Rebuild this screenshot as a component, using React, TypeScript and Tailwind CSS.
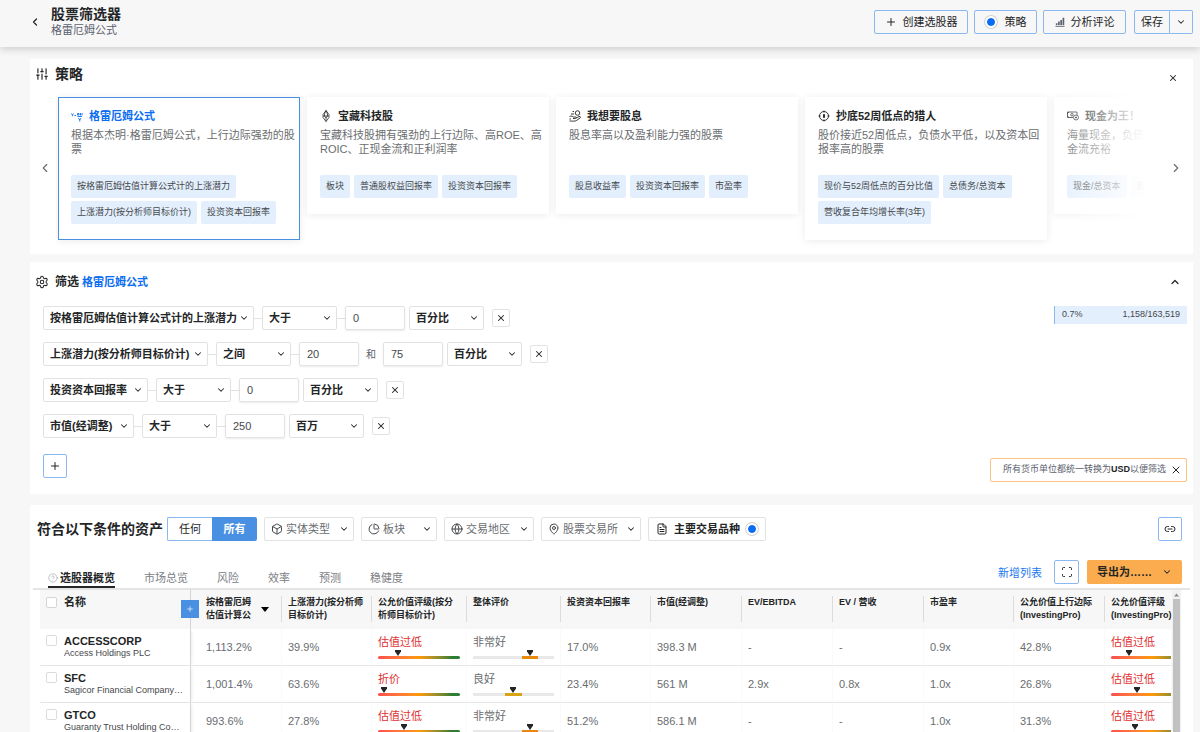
import React, { useState } from "react";
import {
  Box,
  ChartPie,
  ChevronDown,
  ChevronLeft,
  ChevronRight,
  ChevronUp,
  CircleQuestionMark,
  FileText,
  Globe,
  Link2,
  MapPin,
  Plus,
  Scan,
  Settings,
  SlidersVertical,
  X,
} from "lucide-react";

type IconProps = { className?: string };

function FormulaIcon({ className }: IconProps) {
  return (
    <svg viewBox="0 0 24 24" className={className} fill="none" stroke="currentColor" strokeWidth="1.8">
      <path d="M1 7l2 3.500L5 7M3 10.500v2M7 11h3M13 7h3v3h-3zM19 6v5M22 6v5M13 13h9M15 16l2.500 4L20 16M17.500 20v3" />
    </svg>
  );
}

function GemIcon({ className }: IconProps) {
  return (
    <svg viewBox="0 0 24 24" className={className} fill="none" stroke="currentColor" strokeWidth="1.5">
      <path d="M12 1l6 8v6l-6 8-6-8V9zM6 12h12M12 1L9 8v4l3 4 3-4V8zM12 16v7" />
    </svg>
  );
}

function HandCoinIcon({ className }: IconProps) {
  return (
    <svg viewBox="0 0 24 24" className={className} fill="none" stroke="currentColor" strokeWidth="1.8">
      <circle cx="17" cy="6" r="4.5" />
      <path d="M10 3H7M10 8H4M1 13c4-2 6 0 8 1h4c2 0 2 3 0 3H8M14 16l6-3c3-1 4 2 2 3l-7 5c-3 2-8 1-14 1M1 18h3" />
    </svg>
  );
}

function TargetIcon({ className }: IconProps) {
  return (
    <svg viewBox="0 0 24 24" className={className} fill="none" stroke="currentColor" strokeWidth="1.8">
      <circle cx="12" cy="12" r="9" />
      <path d="M12 1v4M12 19v4M1 12h4M19 12h4" />
      <path d="M12 8l1.500 4-1.500 4-1.500-4z" fill="currentColor" />
    </svg>
  );
}

function CashIcon({ className }: IconProps) {
  return (
    <svg viewBox="0 0 24 24" className={className} fill="none" stroke="currentColor" strokeWidth="1.8">
      <path d="M12 15H1V4h19v6M1 7l3-3M1 12l3 3" />
      <circle cx="10" cy="9.5" r="2.5" />
      <circle cx="18" cy="15" r="5" />
      <path d="M16 15h4M18 13v4" />
    </svg>
  );
}

function BarsIcon({ className }: IconProps) {
  return (
    <svg viewBox="0 0 12 12" className={className} fill="currentColor">
      <path d="M1 7.5h2V10H1zM3.7 5.5h2V10h-2zM6.4 3.5h2V10h-2zM9.1 1h2v9h-2zM0.5 10.8h11v.9H.5z" />
    </svg>
  );
}

const STRATEGIES = [
  {
    title: "格雷厄姆公式",
    lines: ["根据本杰明·格雷厄姆公式，上行边际强劲的股", "票"],
    tags: ["按格雷厄姆估值计算公式计的上涨潜力", "上涨潜力(按分析师目标价计)", "投资资本回报率"],
    icon: FormulaIcon,
    active: true,
  },
  {
    title: "宝藏科技股",
    lines: ["宝藏科技股拥有强劲的上行边际、高ROE、高", "ROIC、正现金流和正利润率"],
    tags: ["板块", "普通股权益回报率", "投资资本回报率"],
    icon: GemIcon,
  },
  {
    title: "我想要股息",
    lines: ["股息率高以及盈利能力强的股票"],
    tags: ["股息收益率", "投资资本回报率", "市盈率"],
    icon: HandCoinIcon,
  },
  {
    title: "抄底52周低点的猎人",
    lines: ["股价接近52周低点，负债水平低，以及资本回", "报率高的股票"],
    tags: ["现价与52周低点的百分比值", "总债务/总资本", "营收复合年均增长率(3年)"],
    icon: TargetIcon,
  },
  {
    title: "现金为王！",
    lines: ["海量现金，负债", "金流充裕"],
    tags: ["现金/总资本", "资"],
    icon: CashIcon,
  },
];

const FILTERS = [
  { metric: "按格雷厄姆估值计算公式计的上涨潜力", width: "w-[211px]", op: "大于", values: ["0"], unit: "百分比" },
  { metric: "上涨潜力(按分析师目标价计)", width: "w-[165px]", op: "之间", values: ["20", "75"], unit: "百分比" },
  { metric: "投资资本回报率", width: "w-[105px]", op: "大于", values: ["0"], unit: "百分比" },
  { metric: "市值(经调整)", width: "w-[91px]", op: "大于", values: ["250"], unit: "百万" },
];

const ASSET_FILTERS = [
  { label: "实体类型", icon: Box, width: "w-[90px]" },
  { label: "板块", icon: ChartPie, width: "w-[76px]" },
  { label: "交易地区", icon: Globe, width: "w-[90px]" },
  { label: "股票交易所", icon: MapPin, width: "w-[100px]" },
];

const TABS = ["选股器概览", "市场总览", "风险", "效率", "预测", "稳健度"];

const COLUMNS: string[][] = [
  ["上涨潜力(按分析师", "目标价计)"],
  ["公允价值评级(按分", "析师目标价计)"],
  ["整体评价"],
  ["投资资本回报率"],
  ["市值(经调整)"],
  ["EV/EBITDA"],
  ["EV / 营收"],
  ["市盈率"],
  ["公允价值上行边际", "(InvestingPro)"],
  ["公允价值评级", "(InvestingPro)"],
];

const ROWS = [
  {
    symbol: "ACCESSCORP", name: "Access Holdings PLC", graham: "1,113.2%", upside: "39.9%",
    rating: "估值过低", ratingPos: 24, overall: "非常好", level: 3,
    cells: ["17.0%", "398.3 M", "-", "-", "0.9x", "42.8%"], pro: "估值过低", proPos: 22,
  },
  {
    symbol: "SFC", name: "Sagicor Financial Company…", graham: "1,001.4%", upside: "63.6%",
    rating: "折价", ratingPos: 7, overall: "良好", level: 2,
    cells: ["23.4%", "561 M", "2.9x", "0.8x", "1.0x", "26.8%"], pro: "估值过低", proPos: 32,
  },
  {
    symbol: "GTCO", name: "Guaranty Trust Holding Co…", graham: "993.6%", upside: "27.8%",
    rating: "估值过低", ratingPos: 32, overall: "非常好", level: 3,
    cells: ["51.2%", "586.1 M", "-", "-", "1.0x", "31.3%"], pro: "估值过低", proPos: 29,
  },
];

function StrategyCard({ item }: { item: (typeof STRATEGIES)[number] }) {
  const Icon = item.icon;
  return (
    <article
      className={
        "w-[242px] shrink-0 border bg-white px-3 pt-[11px] pb-[15px] shadow-[0_1px_8px_rgba(0,0,0,0.08)] " +
        (item.active ? "border-[#4a90e2]" : "border-white")
      }
    >
      <h3 className={"flex h-3.5 items-center gap-1.5 text-[11px] font-bold " + (item.active ? "text-[#0a6cf0]" : "text-[#232526]")}>
        <Icon className="size-3" />
        {item.title}
      </h3>
      <p className="mt-[5px] mb-[19px] h-7 text-[11px] leading-[14px] whitespace-nowrap text-[#6a6d70]">
        {item.lines.map((line) => (
          <span key={line} className="block">{line}</span>
        ))}
      </p>
      <ul className="flex flex-wrap gap-x-1 gap-y-[3px]">
        {item.tags.map((tag) => (
          <li key={tag} className="h-[23px] rounded-xs bg-[#e3effd] px-1.5 text-[9px] leading-[22px] whitespace-nowrap text-[#45484b]">
            {tag}
          </li>
        ))}
      </ul>
    </article>
  );
}

function Dropdown({ label, value, width }: { label: string; value: string; width: string }) {
  return (
    <span className={"relative flex h-6 items-center rounded-xs border border-[#e2e2e2] bg-white " + width}>
      <select aria-label={label} className="h-full w-full appearance-none bg-transparent pl-1.5 text-[11px] font-bold text-[#232526]">
        <option>{value}</option>
      </select>
      <ChevronDown className="pointer-events-none absolute right-1 size-2.5 text-[#232526]" strokeWidth={2.5} />
    </span>
  );
}

function Connector() {
  return <span className="h-px w-2 bg-[#e2e2e2]" />;
}

function Marker() {
  return (
    <svg viewBox="0 0 8 6" className="h-1.5 w-2" fill="#232526">
      <path d="M1 0h6v1.500L4 6 1 1.500z" />
    </svg>
  );
}

function RatingBar({ label, position }: { label: string; position: number }) {
  return (
    <div className="w-[82px]">
      <div className="text-[11px] leading-4 text-[#e03131]">{label}</div>
      <div className="flex h-1.5">
        <div style={{ width: `${position - 5}%` }} />
        <Marker />
      </div>
      <div className="h-[3px] rounded-sm bg-linear-to-r from-[#ff4d4d] via-[#ff9900] via-50% to-[#2e7d32] to-90%" />
    </div>
  );
}

function OverallBar({ label, level }: { label: string; level: number }) {
  return (
    <div className="w-[81px]">
      <div className="text-[11px] leading-4">{label}</div>
      <div className="grid grid-cols-5">
        {[0, 1, 2, 3, 4].map((step) => (
          <div key={step}>
            <div className="flex h-1.5 justify-center">{step === level && <Marker />}</div>
            <div className={"h-[3px] " + (step !== level ? "bg-[#e8e8e8]" : level === 3 ? "bg-[#e8890c]" : "bg-[#d9a514]")} />
          </div>
        ))}
      </div>
    </div>
  );
}

function Toggle({ id }: { id: string }) {
  return (
    <input
      id={id}
      type="checkbox"
      defaultChecked
      className="size-3 shrink-0 appearance-none rounded-full border-2 border-white bg-[#0a6cf5] bg-clip-padding ring-1 ring-[#cfd3d6]"
    />
  );
}

export default function App() {
  const [tab, setTab] = useState(TABS[0]);
  const outline = "flex h-6 items-center justify-center rounded-xs border border-[#8ab8f0] text-[11px] text-[#232526]";
  const cell = "overflow-hidden border-b border-[#e6e6e6] border-r border-r-[#fafafa] pl-1.5";
  const barCell = "overflow-hidden border-b border-[#e6e6e6] border-r border-r-[#fafafa] pt-[5px] pl-1.5 align-top";

  return (
    <div className="flex h-screen flex-col overflow-hidden bg-[#f7f7f7] font-['Liberation_Sans','Noto_Sans_CJK_SC',sans-serif] text-[11px] text-[#232526]">
      <header className="z-10 flex h-[47px] shrink-0 items-start bg-[#f7f7f7] pr-[7px] pl-[29px] shadow-[0_2px_8px_rgba(0,0,0,0.18)]">
        <button aria-label="返回" className="mt-4">
          <ChevronLeft className="size-3" strokeWidth={2.5} />
        </button>
        <div className="mt-1.5 ml-2.5 flex-1">
          <h1 className="text-[14px] leading-4 font-bold">股票筛选器</h1>
          <p className="leading-4 text-[#5b616e]">格雷厄姆公式</p>
        </div>
        <div className="mt-2.5 flex gap-1.5">
          <button className={outline + " w-[94px] gap-1.5"}>
            <Plus className="size-3" />
            创建选股器
          </button>
          <label htmlFor="strategies" className={outline + " w-[63px] gap-2"}>
            <Toggle id="strategies" />
            策略
          </label>
          <button className={outline + " w-[83px] gap-1.5"}>
            <BarsIcon className="size-2.5 text-[#5b616e]" />
            分析评论
          </button>
          <div className="ml-0.5 flex">
            <button className={outline + " w-9 rounded-r-none"}>保存</button>
            <button aria-label="更多保存选项" className={outline + " w-[23px] rounded-l-none border-l-0"}>
              <ChevronDown className="size-2.5" strokeWidth={2.5} />
            </button>
          </div>
        </div>
      </header>

      <main className="flex min-h-0 flex-1 flex-col pt-3 pr-[7px] pl-[30px]">
        <section className="h-[195px] shrink-0 bg-white">
          <div className="flex h-[30px] items-center gap-1.5 pr-[15px] pl-[5px]">
            <SlidersVertical className="size-3.5" />
            <h2 className="flex-1 text-[14px] leading-4 font-bold">策略</h2>
            <button aria-label="关闭" className="mt-2">
              <X className="size-2.5" strokeWidth={2.5} />
            </button>
          </div>
          <div className="relative flex items-center pr-2.5 pl-2">
            <button aria-label="上一个" className="mb-2 w-[18px] shrink-0">
              <ChevronLeft className="size-3.5 text-[#6a6d70]" />
            </button>
            <div className="relative flex min-w-0 flex-1 items-start gap-[7px] overflow-hidden px-0.5 pt-2 pb-3.5">
              {STRATEGIES.map((item) => (
                <StrategyCard key={item.title} item={item} />
              ))}
              <div className="absolute inset-y-0 right-0 w-28 bg-linear-to-r from-white/0 to-white to-90%" />
            </div>
            <button aria-label="下一个" className="mb-2 ml-3 flex w-3.5 shrink-0 justify-end">
              <ChevronRight className="size-3.5 shrink-0 text-[#6a6d70]" />
            </button>
          </div>
        </section>

        <section className="mt-2 flex h-[232px] shrink-0 flex-col bg-white">
          <div className="flex h-10 items-center pr-3 pl-[5px]">
            <Settings className="size-3.5" strokeWidth={1.75} />
            <h2 className="ml-1.5 text-[12px] font-bold">筛选</h2>
            <a href="#strategy" className="ml-[3px] flex-1 font-bold text-[#0a6cf0]">格雷厄姆公式</a>
            <button aria-label="收起">
              <ChevronUp className="size-3" strokeWidth={2.5} />
            </button>
          </div>
          <div className="flex flex-1 justify-between pt-1 pr-1.5 pb-3 pl-[13px]">
            <div className="flex flex-col gap-3">
              {FILTERS.map((filter) => (
                <div key={filter.metric} className="flex items-center">
                  <Dropdown label="指标" value={filter.metric} width={filter.width} />
                  <Connector />
                  <Dropdown label="条件" value={filter.op} width="w-[75px]" />
                  <Connector />
                  {filter.values.map((value, i) => (
                    <React.Fragment key={value}>
                      {i > 0 && <span className="w-6 text-center text-[10px] text-[#5b616e]">和</span>}
                      <input
                        aria-label={filter.metric}
                        defaultValue={value}
                        className="h-6 w-[60px] rounded-xs border border-[#e2e2e2] px-[7px] text-[11px] text-[#45484b] shadow-[0_1px_2px_rgba(0,0,0,0.08)]"
                      />
                    </React.Fragment>
                  ))}
                  <span className="w-1" />
                  <Dropdown label="单位" value={filter.unit} width="w-[75px]" />
                  <button aria-label="删除" className="ml-2 flex size-[18px] items-center justify-center rounded-xs border border-[#e2e2e2]">
                    <X className="size-2.5" strokeWidth={2.5} />
                  </button>
                </div>
              ))}
              <button aria-label="添加条件" className={outline + " mt-1 w-6"}>
                <Plus className="size-3" />
              </button>
            </div>
            <div className="flex flex-col items-end justify-between">
              <div className="flex h-[18px] w-[133px] items-center justify-between border-l border-[#8ab8f0] bg-[#e3effd] px-[7px] text-[9px] text-[#45484b]">
                <span>0.7%</span>
                <span>1,158/163,519</span>
              </div>
              <div className="flex h-6 items-center gap-1 rounded-xs border border-[#fac27e] pr-1 pl-3 text-[9px] text-[#5b616e]">
                <p>所有货币单位都统一转换为<b className="text-[#232526]">USD</b>以便筛选</p>
                <button aria-label="关闭提示">
                  <X className="size-3 text-[#232526]" />
                </button>
              </div>
            </div>
          </div>
        </section>

        <section className="mt-[11px] flex min-h-0 flex-1 flex-col bg-white">
          <div className="flex h-12 shrink-0 items-center gap-[7px] pr-[11px] pl-[7px]">
            <h2 className="text-[14px] font-bold whitespace-nowrap">符合以下条件的资产</h2>
            <div className="-ml-[3px] flex">
              <button className={outline + " w-[45px] rounded-r-none border-r-0"}>任何</button>
              <button className="h-6 w-[45px] rounded-r-xs bg-[#4a90e2] font-bold text-white">所有</button>
            </div>
            {ASSET_FILTERS.map(({ label, icon: Icon, width }) => (
              <span key={label} className={"relative flex h-6 items-center rounded-xs border border-[#e2e2e2] " + width}>
                <Icon className="pointer-events-none absolute left-1.5 size-3 text-[#45484b]" />
                <select aria-label={label} className="h-full w-full appearance-none bg-transparent pl-[21px] text-[11px] text-[#6a6d70]">
                  <option>{label}</option>
                </select>
                <ChevronDown className="pointer-events-none absolute right-1 size-2.5" strokeWidth={2.5} />
              </span>
            ))}
            <label htmlFor="primary" className="flex h-6 items-center gap-1.5 rounded-xs border border-[#e2e2e2] px-[7px] font-bold whitespace-nowrap">
              <FileText className="size-3" />
              主要交易品种
              <Toggle id="primary" />
            </label>
            <button aria-label="复制链接" className={outline + " ml-auto w-6"}>
              <Link2 className="size-3" />
            </button>
          </div>

          <div className="mx-[3px] flex h-[37px] shrink-0 items-end border-b-2 border-[#e4e4e4] pr-2 pl-[15px]">
            <nav className="flex gap-[29px]">
              {TABS.map((name, i) => (
                <button
                  key={name}
                  onClick={() => setTab(name)}
                  className={
                    "flex h-[18px] items-center gap-0.5 border-b-2 " +
                    (name === tab ? "border-[#232526] font-bold text-[#232526]" : "border-transparent text-[#7c8085]")
                  }
                >
                  {i === 0 && <CircleQuestionMark className="size-2.5 text-[#b5b8bb]" />}
                  {name}
                </button>
              ))}
            </nav>
            <a href="#new" className="mb-[7px] ml-auto text-[#1a78f0]">新增列表</a>
            <button aria-label="全屏" className={outline + " mb-1 ml-3 w-[25px]"}>
              <Scan className="size-3" />
            </button>
            <button className="mb-1 ml-2 flex h-6 w-[95px] items-center justify-center gap-2.5 rounded-xs bg-[#faac4e] font-bold">
              导出为……
              <ChevronDown className="size-2.5" strokeWidth={2.5} />
            </button>
          </div>

          <div className="relative flex min-h-0 flex-1 pr-3 pl-2.5">
            <div className="min-w-0 flex-1 overflow-hidden">
              <table className="w-full table-fixed border-separate border-spacing-0 text-left">
                <colgroup>
                  <col className="w-[151px]" />
                  <col className="w-[91px]" />
                  <col className="w-[90px]" />
                  <col className="w-[95px]" />
                  <col className="w-[94px]" />
                  <col className="w-[90px]" />
                  <col className="w-[91px]" />
                  <col className="w-[91px]" />
                  <col className="w-[91px]" />
                  <col className="w-[90px]" />
                  <col className="w-[91px]" />
                  <col />
                </colgroup>
                <thead>
                  <tr className="h-[39px] bg-[#f7f7f7] align-top">
                    <th className="border-r border-[#d5d5d5] pt-1 pl-1.5">
                      <div className="flex h-4 items-center gap-[7px]">
                        <input
                          type="checkbox"
                          aria-label="全选"
                          className="size-[11px] appearance-none rounded-xs border border-[#d5d5d5] bg-white"
                        />
                        名称
                      </div>
                    </th>
                    <th className="pt-1.5 pl-[15px] text-[9px] leading-[13px] whitespace-nowrap">
                      <div className="flex items-center border-r border-[#dcdcdc]">
                        <span>
                          按格雷厄姆
                          <br />
                          估值计算公
                        </span>
                        <svg viewBox="0 0 8 5" className="ml-2.5 h-[5px] w-2" fill="#000">
                          <path d="M0 0h8L4 5z" />
                        </svg>
                      </div>
                    </th>
                    {COLUMNS.map((lines, i) => (
                      <th key={i} className="pt-1.5 pl-1.5 text-[9px] leading-[13px] whitespace-nowrap">
                        <div className={"h-[26px] " + (i < COLUMNS.length - 1 ? "border-r border-[#dcdcdc]" : "")}>
                          {lines.map((line) => (
                            <span key={line} className="block">{line}</span>
                          ))}
                        </div>
                      </th>
                    ))}
                  </tr>
                </thead>
                <tbody>
                  {ROWS.map((row) => (
                    <tr key={row.symbol} className="h-[37px] text-[#6a6d70]">
                      <td className="border-r border-b border-[#e6e6e6] border-r-[#d5d5d5] pl-1.5 align-top shadow-[3px_0_3px_-2px_rgba(0,0,0,0.08)]">
                        <div className="flex gap-[7px] pt-1.5">
                          <input
                            type="checkbox"
                            aria-label={row.symbol}
                            className="size-[11px] shrink-0 appearance-none rounded-xs border border-[#dcdcdc] bg-white"
                          />
                          <div className="whitespace-nowrap">
                            <a href={"#" + row.symbol} className="block text-[11px] leading-3 font-bold text-[#232526]">{row.symbol}</a>
                            <div className="text-[9px] leading-3 text-[#45484b]">{row.name}</div>
                          </div>
                        </div>
                      </td>
                      <td className="border-r border-b border-[#e6e6e6] border-r-[#fafafa] pl-[15px]">{row.graham}</td>
                      <td className={cell}>{row.upside}</td>
                      <td className={barCell}>
                        <RatingBar label={row.rating} position={row.ratingPos} />
                      </td>
                      <td className={barCell}>
                        <OverallBar label={row.overall} level={row.level} />
                      </td>
                      {row.cells.map((value, i) => (
                        <td key={i} className={cell}>{value}</td>
                      ))}
                      <td className={barCell}>
                        <RatingBar label={row.pro} position={row.proPos} />
                      </td>
                    </tr>
                  ))}
                </tbody>
              </table>
            </div>
            <div className="flex w-[9px] shrink-0 flex-col items-center bg-[#f1f1f1]">
              <svg viewBox="0 0 9 9" className="h-[9px] w-[9px] shrink-0" fill="#8a8a8a">
                <path d="M2 6.500h5L4.500 3.500z" />
              </svg>
              <div className="w-[7px] flex-1 bg-[#c1c1c1]" />
            </div>
            <button
              aria-label="添加列"
              className="absolute top-2.5 left-[151px] flex size-[18px] items-center justify-center bg-[#4a90e2] text-white"
            >
              <Plus className="size-2" />
            </button>
          </div>
        </section>
      </main>
    </div>
  );
}
